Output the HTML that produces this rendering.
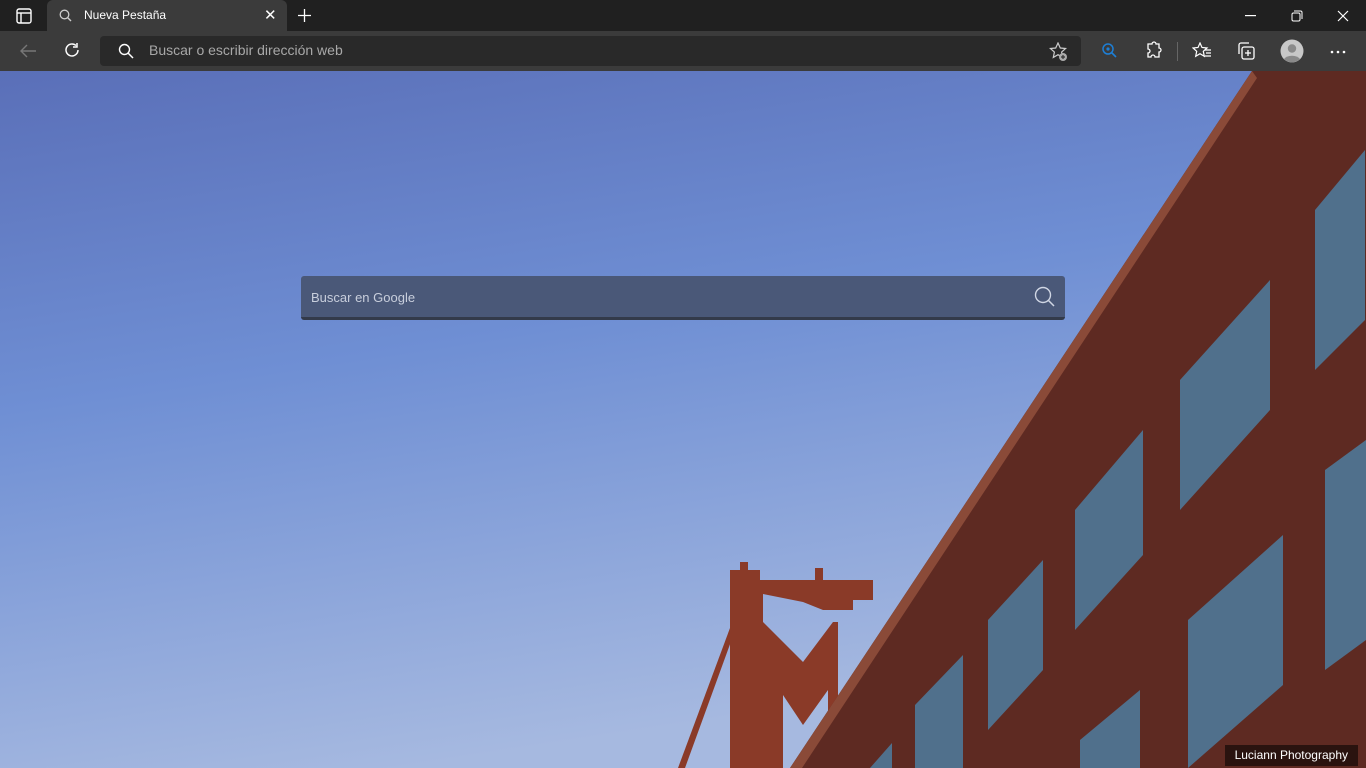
<!DOCTYPE html>
<html><head><meta charset="utf-8"><style>
*{margin:0;padding:0;box-sizing:border-box}
body{width:1366px;height:768px;overflow:hidden;font-family:"Segoe UI","Liberation Sans",sans-serif;background:#202020}
.tabbar{position:absolute;top:0;left:0;width:1366px;height:31px;background:#202020}
.tab{position:absolute;left:47px;top:0;width:240px;height:31px;background:#3b3b3b;border-radius:6px 6px 0 0;color:#fff;font-size:12px}
.toolbar{position:absolute;top:31px;left:0;width:1366px;height:40px;background:#3b3b3b}
.addr{position:absolute;left:100px;top:5px;width:981px;height:30px;background:#292929;border-radius:4px;color:#a8a8a8;font-size:14px}
.bg{position:absolute;top:71px;left:0;width:1366px;height:697px}
.search{position:absolute;left:301px;top:276px;width:764px;height:44px;background:#4a5878;border-radius:3px;border-bottom:3px solid #333a4a;color:#c8cedc;font-size:13px}
.credit{position:absolute;right:8px;bottom:2px;background:rgba(0,0,0,.55);color:#fff;font-size:12px;padding:3px 10px 4px}
svg{position:absolute}
</style></head><body>
<div class="tabbar">
<svg style="left:16px;top:8px" width="16" height="16"><rect x="1" y="1" width="14" height="14" rx="2" fill="none" stroke="#fff" stroke-width="1.4"/><line x1="1" y1="5" x2="15" y2="5" stroke="#fff" stroke-width="1.4"/><line x1="5" y1="5" x2="5" y2="15" stroke="#fff" stroke-width="1.4"/></svg>
<div class="tab"><svg style="left:12px;top:9px" width="13" height="13"><circle cx="5.5" cy="5.5" r="4.3" fill="none" stroke="#ccc" stroke-width="1.3"/><line x1="8.5" y1="8.5" x2="12" y2="12" stroke="#ccc" stroke-width="1.4"/></svg><span style="position:absolute;left:37px;top:8px">Nueva Pestaña</span><span style="position:absolute;left:217px;top:6px;font-size:15px">✕</span></div>
<svg style="left:297px;top:8px" width="15" height="15"><path d="M7.5 1v13M1 7.5h13" stroke="#fff" stroke-width="1.3"/></svg>
<svg style="left:1245px;top:15px" width="12" height="2"><rect width="11" height="1.2" fill="#fff"/></svg>
<svg style="left:1291px;top:10px" width="12" height="12"><rect x="1" y="3" width="8" height="8" rx="1.5" fill="none" stroke="#fff"/><path d="M3 1h6.5a1.5 1.5 0 0 1 1.5 1.5V9" fill="none" stroke="#fff"/></svg>
<svg style="left:1337px;top:10px" width="12" height="12"><path d="M1 1l10 10M11 1L1 11" stroke="#fff" stroke-width="1.2"/></svg>
</div>
<div class="toolbar">
<svg style="left:19px;top:11px" width="18" height="18"><path d="M17 9H2M8 3L2 9l6 6" fill="none" stroke="#777" stroke-width="1.4"/></svg>
<svg style="left:63px;top:10px" width="18" height="18"><path d="M15 9a6 6 0 1 1-2-4.5" fill="none" stroke="#fff" stroke-width="1.5"/><path d="M14 2v4h-4" fill="none" stroke="#fff" stroke-width="1.5"/></svg>
<div class="addr"><svg style="left:18px;top:7px" width="16" height="16"><circle cx="6.5" cy="6.5" r="5" fill="none" stroke="#fff" stroke-width="1.4"/><line x1="10" y1="10" x2="15" y2="15" stroke="#fff" stroke-width="1.5"/></svg><span style="position:absolute;left:49px;top:6px">Buscar o escribir dirección web</span>
<svg style="left:949px;top:6px" width="20" height="20"><path d="M9 1l2.3 5 5.3.5-4 3.6 1.1 5.3L9 12.7 4.3 15.4l1.1-5.3-4-3.6 5.3-.5z" fill="none" stroke="#ccc" stroke-width="1.2"/><circle cx="14" cy="15" r="4" fill="#aaa"/><path d="M14 13v4M12 15h4" stroke="#333" stroke-width="1.2"/></svg></div>
<svg style="left:1101px;top:11px" width="16" height="18"><circle cx="7" cy="7" r="5" fill="none" stroke="#1d7fd6" stroke-width="1.5"/><line x1="10.5" y1="10.5" x2="15" y2="15" stroke="#1d7fd6" stroke-width="1.6"/><circle cx="7" cy="7" r="1.6" fill="#1d7fd6"/></svg>
<svg style="left:1144px;top:10px" width="18" height="20"><path d="M5 3h3a2 2 0 0 1 4 0h3v4a2 2 0 0 1 0 4v5h-4a2 2 0 0 0-4 0H4v-4a2 2 0 0 0 0-4V3z" fill="none" stroke="#fff" stroke-width="1.3"/></svg>
<div style="position:absolute;left:1177px;top:11px;width:1px;height:19px;background:#666"></div>
<svg style="left:1192px;top:11px" width="20" height="18"><path d="M8 1l2 4.5 5 .5-3.7 3.3 1 5L8 11.7 3.7 14.3l1-5L1 6l5-.5z" fill="none" stroke="#fff" stroke-width="1.2"/><path d="M13 8h6M14 11h5M13 14h6" stroke="#fff" stroke-width="1.2"/></svg>
<svg style="left:1236px;top:10px" width="20" height="20"><path d="M3 13V4a2 2 0 0 1 2-2h8" fill="none" stroke="#fff" stroke-width="1.3"/><rect x="6" y="6" width="12" height="12" rx="2" fill="none" stroke="#fff" stroke-width="1.3"/><path d="M12 9v6M9 12h6" stroke="#fff" stroke-width="1.3"/></svg>
<svg style="left:1280px;top:8px" width="24" height="24"><circle cx="12" cy="12" r="11.5" fill="#c8c8c8"/><circle cx="12" cy="9.5" r="4.2" fill="#8a8a8a"/><path d="M4 20a9 6 0 0 1 16 0 11 11 0 0 1-16 0z" fill="#8a8a8a"/></svg>
<svg style="left:1330px;top:19px" width="16" height="4"><circle cx="2" cy="2" r="1.3" fill="#fff"/><circle cx="8" cy="2" r="1.3" fill="#fff"/><circle cx="14" cy="2" r="1.3" fill="#fff"/></svg>
</div>
<svg class="bg" style="left:0;top:71px" width="1366" height="697" viewBox="0 71 1366 697">
<defs><linearGradient id="sky" x1="0" y1="0" x2="0.3" y2="1"><stop offset="0" stop-color="#5a6fb8"/><stop offset="0.45" stop-color="#6f8fd4"/><stop offset="1" stop-color="#a6b9e0"/></linearGradient></defs>
<rect x="0" y="71" width="1366" height="697" fill="url(#sky)"/>
<path d="M730 768V570h10v-8h8v8h12v10h55v-12h8v12h50v20h-20v10h-30l-20-8-40-8v28l40 40 30-40h5v140h-10V690l-25 35-20-30v73z" fill="#8a3a28"/>
<path d="M678 768l52-140 3 8-48 132z" fill="#8a3a28"/>
<path d="M1252 71H1366V768H790L1252 71z" fill="#5e2a22"/>
<path d="M1252 71l-462 697h12l455-690z" fill="#8a4a38"/>
<g fill="#4f7898" opacity="0.9">
<path d="M1315 210l50-60v170l-50 50z"/>
<path d="M1180 380l90-100v130l-90 100z"/>
<path d="M1075 510l68-80v125l-68 75z"/>
<path d="M988 620l55-60v110l-55 60z"/>
<path d="M915 705l48-50v113h-48z"/>
<path d="M1325 470l41-30v200l-41 30z"/>
<path d="M1188 620l95-85v150l-95 83z"/>
<path d="M1080 740l60-50v78h-60z"/>
<path d="M870 768l22-25v25z"/>
</g>
</svg>
<div class="search"><span style="position:absolute;left:10px;top:14px">Buscar en Google</span><svg style="left:733px;top:10px" width="22" height="22"><circle cx="9" cy="9" r="7.5" fill="none" stroke="#d0d6e4" stroke-width="1.4"/><line x1="14.5" y1="14.5" x2="20" y2="20" stroke="#d0d6e4" stroke-width="1.5"/></svg></div>
<div class="credit">Luciann Photography</div>
</body></html>
